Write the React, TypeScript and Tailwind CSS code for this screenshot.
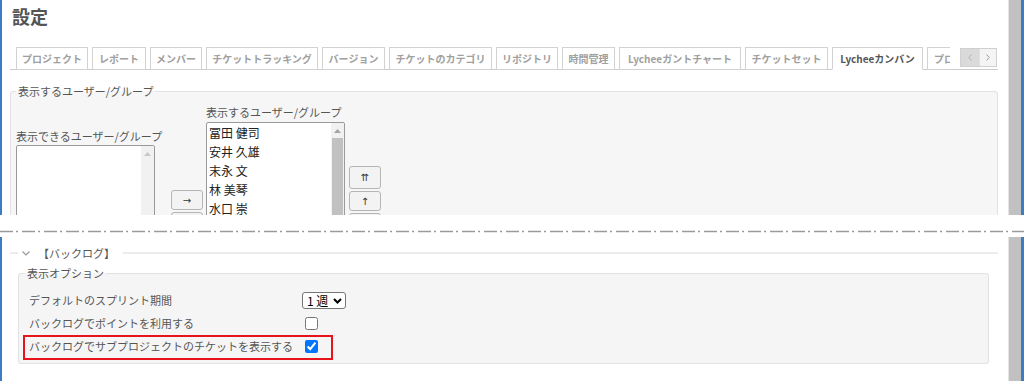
import React from "react";

const tabs = [
  { label: "プロジェクト", w: "w-[72px]" },
  { label: "レポート", w: "w-[54px]" },
  { label: "メンバー", w: "w-[52px]" },
  { label: "チケットトラッキング", w: "w-[112px]" },
  { label: "バージョン", w: "w-[63px]" },
  { label: "チケットのカテゴリ", w: "w-[103px]" },
  { label: "リポジトリ", w: "w-[62px]" },
  { label: "時間管理", w: "w-[53px]" },
  { label: "Lycheeガントチャート", w: "w-[122px]" },
  { label: "チケットセット", w: "w-[83px]" },
  { label: "Lycheeカンバン", w: "w-[91px]", selected: true },
  { label: "プロジェクト", w: "w-[72px]" },
];

const members = ["冨田 健司", "安井 久雄", "末永 文", "林 美琴", "水口 崇", "小松 武"];

const UpArrow = ({ color }: { color: string }) => (
  <svg width="7" height="4" viewBox="0 0 7 4">
    <path d="M0 4 L3.5 0 L7 4 Z" fill={color} />
  </svg>
);

const ListBox = ({ items, active }: { items: string[]; active: boolean }) => (
  <div className="flex h-[150px] w-[139px] overflow-hidden rounded-[2px] border border-[#9a9a9a] bg-white">
    <div className="flex-1 pl-[2px] text-[12px] leading-[19px] text-[#222]">
      {items.map((m) => (
        <div key={m}>{m}</div>
      ))}
    </div>
    <div className="flex w-[13px] flex-col items-center bg-[#f1f1f1]">
      <div className="mt-[6px] mb-[5px]">
        <UpArrow color={active ? "#a3a3a3" : "#c8c8c8"} />
      </div>
      {active && <div className="w-[11px] flex-1 bg-[#c1c1c1]" />}
    </div>
  </div>
);

const SmallButton = ({ label, h }: { label: string; h: string }) => (
  <button
    className={`flex ${h} w-[32px] items-center justify-center rounded-[3px] border border-[#b5b5b5] bg-[#f3f3f3] font-['DejaVu_Sans',sans-serif] text-[10px] text-[#333]`}
  >
    {label}
  </button>
);

const Edge = () => <div className="w-[2px] shrink-0 bg-[#3b7cc4]" />;

const Scrollbar = () => (
  <>
    <div className="w-[13px] shrink-0 border-l border-[#e4e4e4] bg-[#c1c1c1]" />
    <div className="w-[3px] shrink-0 bg-[#3b7cc4]" />
  </>
);

export default function App() {
  return (
    <div className="h-[381px] w-[1024px] overflow-hidden bg-white font-['Noto_Sans_CJK_JP',sans-serif] text-[#555]">
      {/* upper half of the page */}
      <div className="flex h-[215px] overflow-hidden">
        <Edge />
        <div className="flex-1 pl-[8px] pr-[10px]">
          <h2 className="ml-[2px] mt-[5px] text-[18px] font-bold leading-[22px] text-[#555]">設定</h2>

          <div className="relative mt-[20px] flex h-[23px] border-b border-[#cccccc]">
            <div className="flex h-[23px] w-[940px] gap-[4px] overflow-hidden pl-[6px]">
              {tabs.map((t, i) => (
                <div
                  key={i}
                  className={`flex h-[23px] shrink-0 ${t.w} items-center ${i === tabs.length - 1 ? "justify-start pl-[6px]" : "justify-center"} whitespace-nowrap border border-[#d2d2d2] bg-white text-[10px] font-bold ${t.selected ? "border-b-white text-[#555]" : "text-[#a0a0a0]"}`}
                >
                  {t.label}
                </div>
              ))}
            </div>
            <div className="absolute right-[1px] top-[1px] flex h-[19px] border border-[#d0d0d0]">
              <div className="flex w-[18px] items-center justify-center bg-[#dadada]">
                <svg width="4" height="7" viewBox="0 0 4 7">
                  <path d="M3.5 0.5 L0.8 3.5 L3.5 6.5" fill="none" stroke="#b0b0b0" strokeWidth="1" />
                </svg>
              </div>
              <div className="flex w-[17px] items-center justify-center border-l border-[#e0e0e0] bg-[#f4f4f4]">
                <svg width="4" height="7" viewBox="0 0 4 7">
                  <path d="M0.5 0.5 L3.2 3.5 L0.5 6.5" fill="none" stroke="#a0a0a0" strokeWidth="1" />
                </svg>
              </div>
            </div>
          </div>

          <fieldset className="mt-[13px] rounded-[3px] border border-[#e2e2e2] bg-[#f6f6f6] px-[5px]">
            <legend className="px-[2px] text-[11px] leading-[16px] text-[#555]">表示するユーザー/グループ</legend>
            <div className="flex items-start">
              <div className="mt-[30px] w-[139px]">
                <div className="whitespace-nowrap text-[11px] leading-[14px]">表示できるユーザー/グループ</div>
                <div className="mt-[2px]">
                  <ListBox items={[]} active={false} />
                </div>
              </div>
              <div className="ml-[16px] mt-[91px] flex flex-col gap-[2px]">
                <SmallButton label="→" h="h-[20px]" />
                <SmallButton label="←" h="h-[20px]" />
              </div>
              <div className="ml-[3px] mt-[6px] w-[139px]">
                <div className="whitespace-nowrap text-[11px] leading-[14px]">表示するユーザー/グループ</div>
                <div className="mt-[3px]">
                  <ListBox items={members} active={true} />
                </div>
              </div>
              <div className="ml-[4px] mt-[67px] flex flex-col gap-[2px]">
                <SmallButton label="⇈" h="h-[23px]" />
                <SmallButton label="↑" h="h-[20px]" />
                <SmallButton label="↓" h="h-[20px]" />
              </div>
            </div>
          </fieldset>
        </div>
        <Scrollbar />
      </div>

      {/* cut line */}
      <div className="h-[22px] pt-[15px]">
        <svg width="1024" height="3" className="block">
          <line x1="0" y1="1.5" x2="1024" y2="1.5" stroke="#9a9a9a" strokeWidth="1.5" strokeDasharray="13 3 2 4" />
        </svg>
      </div>

      {/* lower half of the page */}
      <div className="flex h-[144px]">
        <Edge />
        <div className="flex-1 pl-[8px] pr-[10px]">
          <div className="mt-[9px] flex h-[14px] items-center">
            <div className="h-[2px] w-[8px] bg-[#ececec]" />
            <svg width="8" height="5" viewBox="0 0 8 5" className="ml-[4px]">
              <path d="M0.5 0.5 L4 4 L7.5 0.5" fill="none" stroke="#999" strokeWidth="1.2" />
            </svg>
            <span className="ml-[8px] text-[11px] leading-[14px] text-[#555]">【バックログ】</span>
            <div className="ml-[8px] h-[2px] flex-1 bg-[#ececec]" />
          </div>

          <fieldset className="ml-[8px] mr-[9px] mt-[5px] rounded-[3px] border border-[#e2e2e2] bg-[#f5f5f5] pb-[5px] pl-[6px]">
            <legend className="px-[2px] text-[11px] leading-[16px] text-[#555]">表示オプション</legend>
            <div className="ml-[4px] mt-[8px] text-[11px]">
              <div className="flex h-[23px] items-center">
                <div className="w-[273px]">デフォルトのスプリント期間</div>
                <div className="flex h-[17px] w-[44px] items-center justify-between rounded-[3px] border border-[#767676] bg-white pl-[4px] pr-[3px] text-[12px] leading-[15px] text-black">
                  <span>1&nbsp;週</span>
                  <svg width="9" height="6" viewBox="0 0 9 6">
                    <path d="M1 1 L4.5 4.5 L8 1" fill="none" stroke="#000" strokeWidth="2" />
                  </svg>
                </div>
              </div>
              <div className="flex h-[23px] items-center">
                <div className="w-[273px]">バックログでポイントを利用する</div>
                <input type="checkbox" className="ml-[3px] h-[13px] w-[13px]" />
              </div>
              <div className="relative flex h-[23px] items-center">
                <div className="w-[273px] whitespace-nowrap">バックログでサブプロジェクトのチケットを表示する</div>
                <input type="checkbox" defaultChecked className="ml-[3px] h-[13px] w-[13px] accent-[#0075ff]" />
                <div className="absolute left-[-6px] top-0 h-[25px] w-[310px] border-2 border-[#e8141b]" />
              </div>
            </div>
          </fieldset>
        </div>
        <Scrollbar />
      </div>
    </div>
  );
}
